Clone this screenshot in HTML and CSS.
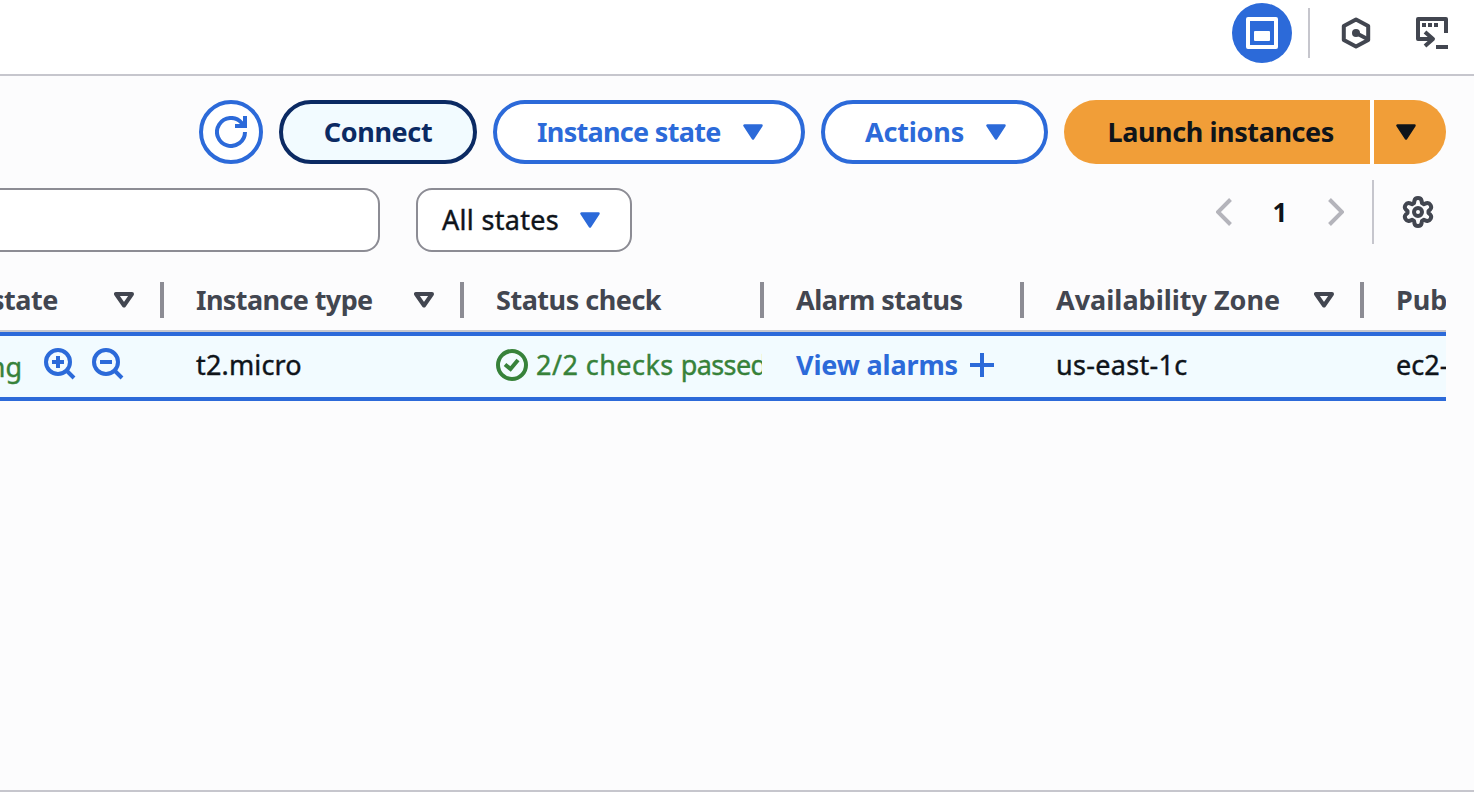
FILE: index.html
```html
<!DOCTYPE html>
<html lang="en">
<head>
<meta charset="utf-8">
<title>Instances</title>
<link rel="stylesheet" href="styles.css">
</head>
<body>
<header class="topbar">
  <button class="round-tool" aria-label="Split panel">
    <svg width="32" height="32" viewBox="0 0 32 32"><rect x="2" y="2" width="28" height="28" fill="none" stroke="#fff" stroke-width="4" stroke-linejoin="round"/><rect x="8" y="14" width="16" height="10" rx="1" fill="#fff"/></svg>
  </button>
  <span class="topbar-divider"></span>
  <svg class="tool hex" width="32" height="32" viewBox="0 0 32 32" fill="none" stroke="#424650" stroke-width="4" stroke-linejoin="round"><path d="M16 2.400 28.200 9v14L16 29.600 3.800 23V9z"/><path d="M16 16l11 5.700"/><circle cx="16" cy="16" r="4" fill="#424650" stroke="none"/></svg>
  <svg class="tool" width="32" height="32" viewBox="0 0 32 32" fill="none" stroke="#424650" stroke-width="4"><path d="M30 16V2H2v20h14" stroke-linejoin="round"/><path d="M9 15l8 7-8 7" stroke-linejoin="round"/><path d="M20 30h12"/><path d="M6 8h4M12 8h4M18 8h4"/></svg>
</header>
<main class="panel">
  <div class="actions">
    <button class="btn refresh" aria-label="Refresh"><svg width="32" height="32" viewBox="0 0 32 32" fill="none" stroke="#2c6ad9" stroke-width="4"><path d="M30 16A14 14 0 1 1 26.500 6.700L29 9.500"/><path d="M20 10h10V0"/></svg></button>
    <button class="btn connect"><span class="t t-connect">Connect</span></button>
    <button class="btn menu state"><span class="t t-state">Instance state</span><svg width="20" height="16" viewBox="0 0 20 16"><path class="caret" d="M1.500 1.500h17L10 14.500z"/></svg></button>
    <button class="btn menu act"><span class="t t-actions">Actions</span><svg width="20" height="16" viewBox="0 0 20 16"><path class="caret" d="M1.500 1.500h17L10 14.500z"/></svg></button>
    <div class="launch">
      <button class="launch-main"><span class="t t-launch">Launch instances</span></button>
      <button class="launch-more" aria-label="More launch options"><svg width="20" height="16" viewBox="0 0 20 16"><path class="caret dark" d="M1.500 1.500h17L10 14.500z"/></svg></button>
    </div>
  </div>
  <div class="filters">
    <div class="search"></div>
    <div class="select"><span class="t t-all">All states</span><svg width="20" height="16" viewBox="0 0 20 16"><path class="caret" d="M1.500 1.500h17L10 14.500z"/></svg></div>
    <div class="paging">
      <svg width="16" height="28" viewBox="0 0 16 28"><path class="chev" d="M14.500 1.500 2 14l12.500 12.500"/></svg>
      <span class="page">1</span>
      <svg width="16" height="28" viewBox="0 0 16 28"><path class="chev" d="M1.500 1.500 14 14 1.500 26.500"/></svg>
      <span class="paging-divider"></span>
      <svg class="gear" width="32" height="32" viewBox="0 0 32 32" fill="none" stroke="#424650" stroke-width="4" stroke-linejoin="round"><path d="M12.500 4.500Q13 2 16 2t3.500 2.500L20 7l2 1.200 2.500-1Q27 6.500 28.500 9t-.300 4.500L26.500 15v2l1.700 1.500Q30 20.500 28.500 23t-4 1.800L22 23.800 20 25l-.500 2.500Q19 30 16 30t-3.500-2.500L12 25l-2-1.200-2.500 1Q5 25.500 3.500 23t.300-4.500L5.500 17v-2L3.800 13.500Q2 11.500 3.500 9t4-1.800L10 8.200 12 7z"/><circle cx="16" cy="16" r="4"/></svg>
    </div>
  </div>
  <div class="table">
    <div class="row head">
      <div class="cell c1"><span class="t t-hstate">state</span><svg width="20" height="16" viewBox="0 0 20 16"><path class="sort" d="M2 2h16l-8 11.500z"/></svg></div>
      <div class="cell c2"><span class="t t-type">Instance type</span><svg width="20" height="16" viewBox="0 0 20 16"><path class="sort" d="M2 2h16l-8 11.500z"/></svg></div>
      <div class="cell c3"><span class="t t-check">Status check</span></div>
      <div class="cell c4"><span class="t t-alarm">Alarm status</span></div>
      <div class="cell c5"><span class="t">Availability Zone</span><svg width="20" height="16" viewBox="0 0 20 16"><path class="sort" d="M2 2h16l-8 11.500z"/></svg></div>
      <div class="cell c6"><span class="t">Pub</span></div>
    </div>
    <div class="row data">
      <div class="cell c1"><span class="t running">ng</span>
        <svg width="32" height="32" viewBox="0 0 32 32" fill="none" stroke="#2c6ad9" stroke-width="4"><circle cx="14" cy="14" r="12"/><path d="M22.500 22.500l7.500 7.500M8 14h12M14 8v12"/></svg>
        <svg width="32" height="32" viewBox="0 0 32 32" fill="none" stroke="#2c6ad9" stroke-width="4"><circle cx="14" cy="14" r="12"/><path d="M22.500 22.500l7.500 7.500M8 14h12"/></svg>
      </div>
      <div class="cell c2"><span class="t t-micro">t2.micro</span></div>
      <div class="cell c3"><svg class="ok" width="32" height="32" viewBox="0 0 32 32" fill="none" stroke="#37823a" stroke-width="4"><circle cx="16" cy="16" r="14"/><path d="M9 15.500l5.500 4.500 7.500-9"/></svg><span class="t passed"><span class="t-checks">2/2 checks</span> <span class="t-passed">passed</span></span></div>
      <div class="cell c4 link"><span class="t t-view">View alarms</span><svg width="24" height="24" viewBox="0 0 24 24"><path d="M12 0v24M0 12h24" stroke="#2c6ad9" stroke-width="4"/></svg></div>
      <div class="cell c5"><span class="t t-east">us-east-1c</span></div>
      <div class="cell c6"><span class="t">ec2-</span></div>
    </div>
  </div>
</main>
</body>
</html>
```
FILE: styles.css
```css
* { box-sizing: border-box; }
body { margin: 0; width: 1474px; height: 792px; overflow: hidden; background: #fcfcfd; color: #0f141a; font-family: "Noto Sans", "Open Sans", sans-serif; font-size: 27px; line-height: 40px; display: flex; flex-direction: column; }
button { font: inherit; color: inherit; margin: 0; padding: 0; border: 0; }
svg { display: block; flex: none; }
.t { white-space: pre; flex: none; }

/* Top toolbar */
.topbar { height: 76px; flex: none; background: #fff; border-bottom: 2px solid #c6c6cd; display: flex; align-items: flex-start; justify-content: flex-end; padding: 3px 26px 0 0; }
.round-tool { width: 60px; height: 60px; border-radius: 50%; background: #2c6ad9; display: flex; align-items: center; justify-content: center; margin-right: 16px; }
.topbar-divider { width: 2px; height: 50px; margin: 5px 30px 0 0; background: #c6c6cd; }
.tool { margin-top: 14px; }
.hex { margin-right: 44px; }

/* Action buttons */
.panel { flex: 1; padding: 24px 28px 0 0; border-bottom: 2px solid #c6c6cd; overflow: hidden; }
.actions { display: flex; justify-content: flex-end; gap: 16px; height: 64px; font-weight: 700; }
.btn { height: 64px; border: 4px solid #2c6ad9; border-radius: 32px; background: #fff; color: #2c6ad9; display: flex; align-items: center; justify-content: center; }
.refresh { width: 64px; }
.connect { width: 198px; background: #f2fbff; border-color: #0b2a63; color: #0b2a63; }
.menu { justify-content: space-between; padding: 0 38px 0 40px; }
.state { width: 312px; }
.act { width: 227px; }
.launch { display: flex; gap: 4px; background: #fff; border-radius: 32px; }
.launch-main { width: 306px; padding-left: 43.5px; text-align: left; background: #f19e38; border-radius: 32px 0 0 32px; }
.launch-more { width: 72px; background: #f19e38; border-radius: 0 32px 32px 0; padding-left: 22px; }
.caret { fill: #2c6ad9; stroke: #2c6ad9; stroke-width: 2.5; stroke-linejoin: round; }
.dark { fill: #0f141a; stroke: #0f141a; }

/* Filters and paging */
.filters { display: flex; margin-top: 24px; height: 64px; }
.search { width: 380px; border: 2px solid #8c8c94; border-left: 0; border-radius: 0 16px 16px 0; background: #fff; }
.select { width: 216px; margin-left: 36px; border: 2px solid #8c8c94; border-radius: 16px; background: #fff; display: flex; align-items: center; justify-content: space-between; padding: 0 30px 0 24px; }
.paging { margin: -8px 0 0 auto; height: 64px; display: flex; align-items: center; }
.page { width: 96px; text-align: center; font-weight: 700; font-size: 26px; }
.chev { fill: none; stroke: #b4b4bb; stroke-width: 4; }
.paging-divider { width: 2px; height: 64px; background: #c6c6cd; margin: 0 28px; }
.gear { margin-right: 12px; }

/* Instances table */
.table { margin-top: 18px; overflow: hidden; }
.row { display: flex; }
.cell { flex: none; display: flex; align-items: center; overflow: hidden; padding-left: 32px; }
.c1 { width: 164px; padding-left: 0; }
.c2, .c3 { width: 300px; }
.c4 { width: 260px; }
.c5 { width: 340px; }
.c6 { width: 82px; }
.head { height: 62px; border-bottom: 2px solid #c6c6cd; font-weight: 700; color: #424650; align-items: center; }
.head .cell { height: 36px; border-right: 4px solid #8c8c94; justify-content: space-between; padding-right: 26px; }
.head .c6 { border-right: 0; padding-right: 0; }
.sort { fill: none; stroke: #424650; stroke-width: 4; stroke-linejoin: round; }
.data { height: 69px; border-top: 4px solid #2c6ad9; border-bottom: 4px solid #2c6ad9; background: #f2fbff; }
.data .cell { padding-bottom: 3px; }
.data .c1 { gap: 16px; padding-bottom: 5px; }
.data .c3 { width: 298px; margin-right: 2px; }
.running { width: 22px; margin: 6px 6px 0 0; display: flex; justify-content: flex-end; color: #37823a; }
.ok { margin-right: 8px; }
.passed { color: #37823a; }
.link { color: #2c6ad9; font-weight: 700; gap: 12px; }

/* Slightly heavier regular weight */
.t-all, .running, .t-micro, .passed, .t-east, .data .c6 { -webkit-text-stroke: 0.4px currentColor; }

/* Label tracking */
.t-connect { letter-spacing: -0.35px; }
.t-state { letter-spacing: -0.7px; }
.t-actions { letter-spacing: -0.2px; }
.t-launch { letter-spacing: -0.42px; }
.t-all { letter-spacing: 0.3px; }
.t-hstate { letter-spacing: -0.5px; margin-left: -9px; }
.t-type { letter-spacing: -0.6px; }
.t-check { letter-spacing: -0.48px; }
.t-alarm { letter-spacing: -0.5px; }
.t-micro { letter-spacing: 0.15px; }
.t-checks { letter-spacing: 0.45px; }
.t-passed { letter-spacing: -0.6px; }
.t-view { letter-spacing: -0.15px; }
.t-east { letter-spacing: 0.3px; }
```
